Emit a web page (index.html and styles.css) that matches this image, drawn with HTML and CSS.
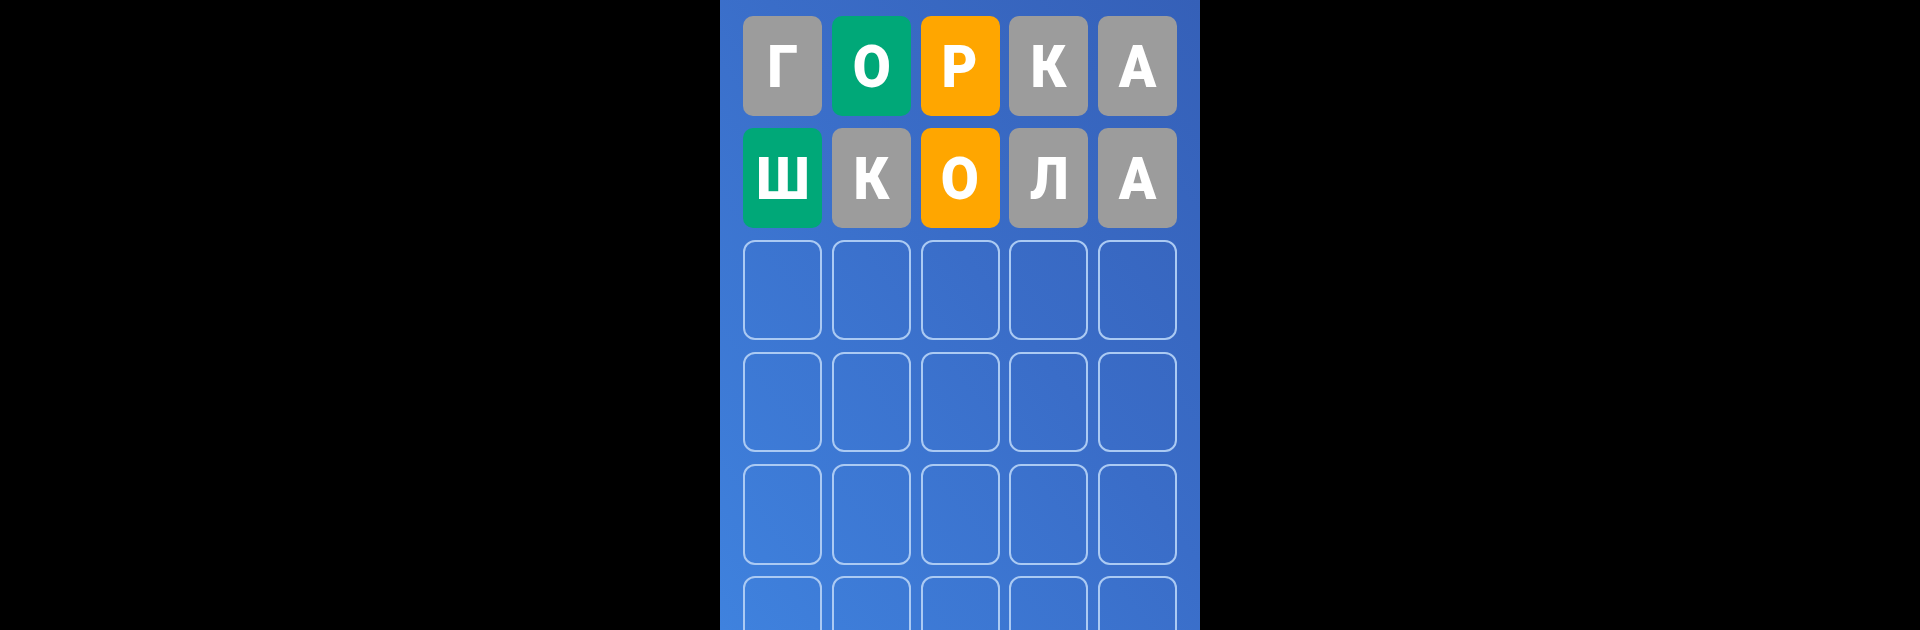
FILE: index.html
```html
<!DOCTYPE html>
<html lang="ru">
<head>
<meta charset="utf-8">
<title>Слова</title>
<link rel="stylesheet" href="styles.css">
</head>
<body>
<main class="screen">
  <section class="board">
    <div class="tile gray"><span class="ch">Г</span></div>
    <div class="tile green"><span class="ch">О</span></div>
    <div class="tile orange"><span class="ch">Р</span></div>
    <div class="tile gray"><span class="ch">К</span></div>
    <div class="tile gray"><span class="ch">А</span></div>

    <div class="tile green"><span class="ch">Ш</span></div>
    <div class="tile gray"><span class="ch">К</span></div>
    <div class="tile orange"><span class="ch">О</span></div>
    <div class="tile gray"><span class="ch">Л</span></div>
    <div class="tile gray"><span class="ch">А</span></div>

    <div class="tile empty"></div><div class="tile empty"></div><div class="tile empty"></div><div class="tile empty"></div><div class="tile empty"></div>
    <div class="tile empty"></div><div class="tile empty"></div><div class="tile empty"></div><div class="tile empty"></div><div class="tile empty"></div>
    <div class="tile empty"></div><div class="tile empty"></div><div class="tile empty"></div><div class="tile empty"></div><div class="tile empty"></div>
    <div class="tile empty"></div><div class="tile empty"></div><div class="tile empty"></div><div class="tile empty"></div><div class="tile empty"></div>
  </section>
</main>
</body>
</html>
```

FILE: styles.css
```css
html, body {
  margin: 0;
  padding: 0;
  height: 100%;
  background: #000;
  overflow: hidden;
}

body {
  display: flex;
  justify-content: center;
  font-family: Roboto, "Noto Sans", "DejaVu Sans", sans-serif;
}

.screen {
  width: 480px;
  height: 630px;
  overflow: hidden;
  background: linear-gradient(to bottom left, #3560b8 0%, #3a6dc8 45%, #3f82de 100%);
}

.board {
  display: grid;
  grid-template-columns: repeat(5, 79px);
  grid-auto-rows: 100.5px;
  column-gap: 9.75px;
  row-gap: 11.6px;
  padding: 15.7px 23px 0 23px;
}

.tile {
  box-sizing: border-box;
  border-radius: 10px;
  display: flex;
  align-items: center;
  justify-content: center;
  color: #fff;
  font-weight: 900;
  font-size: 60px;
  line-height: 1;
  padding-top: 2px;
}

.ch {
  display: inline-block;
  transform: scaleX(0.92);
}

.gray { background: #9c9c9c; }
.green { background: #00a878; }
.orange { background: #ffa600; }

.empty {
  border: 2.5px solid #abcaf3;
  border-radius: 12px;
}
```
